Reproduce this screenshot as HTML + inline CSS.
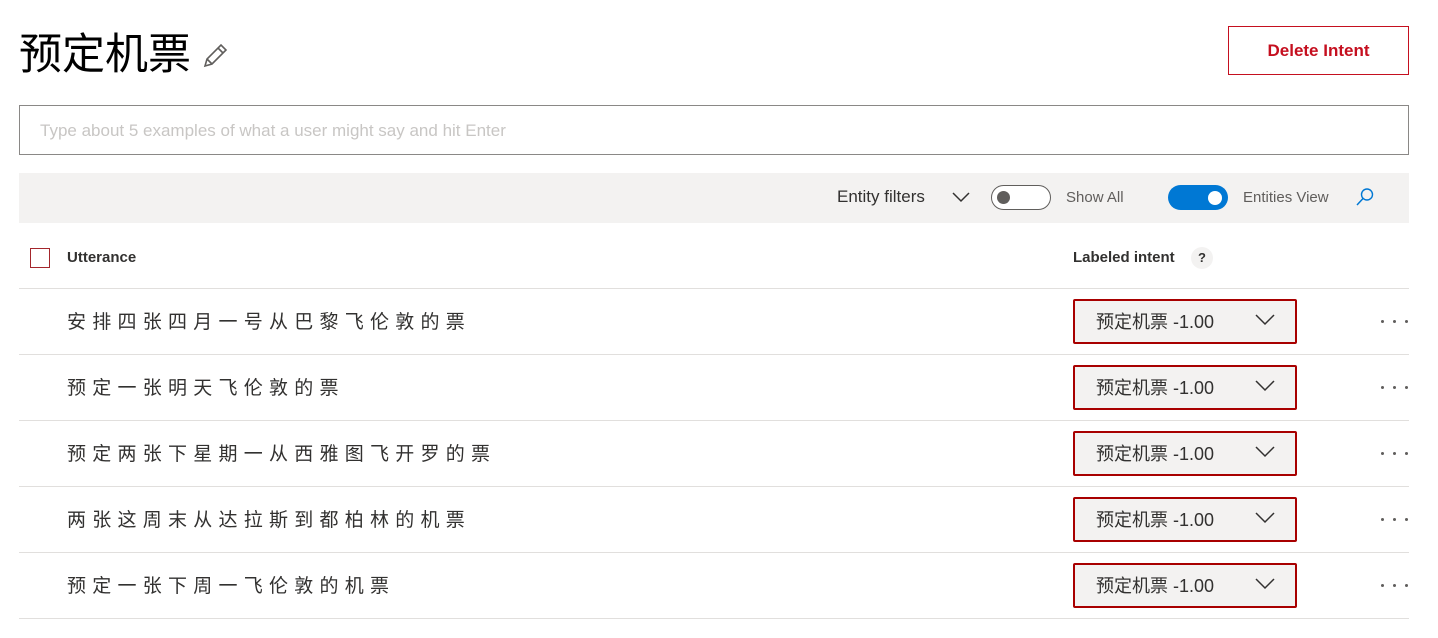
<!DOCTYPE html>
<html><head><meta charset="utf-8"><style>
*{margin:0;padding:0;box-sizing:border-box}
body{width:1438px;height:638px;background:#fff;font-family:"Liberation Sans","Noto Sans CJK SC",sans-serif;color:#323130;position:relative;overflow:hidden}
.abs{position:absolute}
.title{left:19px;top:28px;font-size:43px;color:#000;line-height:54px}
.del{left:1228px;top:26px;width:181px;height:49px;border:1px solid #c50f1f;color:#c50f1f;font-size:17px;font-weight:bold;display:flex;align-items:center;justify-content:center}
.inp{left:19px;top:105px;width:1390px;height:50px;border:1px solid #8a8886;font-size:17px;color:#c8c6c4;padding-left:20px;line-height:50px}
.bar{left:19px;top:173px;width:1390px;height:50px;background:#f3f2f1}
.sep{left:19px;width:1390px;height:1px;background:#e1dfdd}
.utt{left:67px;font-size:19px;letter-spacing:6.25px;color:#323130;line-height:24px;white-space:nowrap}
.dd{left:1073px;width:224px;height:45px;border:2px solid #a80000;border-radius:2px;background:#f3f2f1;font-size:18px;color:#323130;padding-left:21px;line-height:43px}
.dots{left:1381px;width:28px;height:4px}
.dots i{position:absolute;top:0;width:3px;height:3px;border-radius:50%;background:#605e5c}
</style></head><body>
<div class="abs title">预定机票</div>
<svg class="abs" style="left:202px;top:43px" width="26" height="26" viewBox="0 0 26 26"><path d="M3 23 L5 16 L19 2 L24 7 L10 21 Z M5 16 L10 21 M16 5 L21 10" fill="none" stroke="#605e5c" stroke-width="1.6"/></svg>
<div class="abs del">Delete Intent</div>
<div class="abs inp">Type about 5 examples of what a user might say and hit Enter</div>
<div class="abs bar"></div>
<div class="abs" style="left:837px;top:187px;font-size:17px;color:#323130">Entity filters</div>
<svg class="abs" style="left:952px;top:191px" width="18" height="12"><path d="M1 2 L9 10 L17 2" fill="none" stroke="#323130" stroke-width="1.5"/></svg>
<div class="abs" style="left:991px;top:185px;width:60px;height:25px;border:1px solid #605e5c;border-radius:13px;background:#fff"></div>
<div class="abs" style="left:997px;top:191px;width:13px;height:13px;border-radius:50%;background:#605e5c"></div>
<div class="abs" style="left:1066px;top:189px;font-size:15px;color:#605e5c">Show All</div>
<div class="abs" style="left:1168px;top:185px;width:60px;height:25px;border-radius:13px;background:#0078d4"></div>
<div class="abs" style="left:1208px;top:191px;width:14px;height:14px;border-radius:50%;background:#fff"></div>
<div class="abs" style="left:1243px;top:189px;font-size:15px;color:#605e5c">Entities View</div>
<svg class="abs" style="left:1355px;top:187px" width="20" height="20"><circle cx="12" cy="7.5" r="5.5" fill="none" stroke="#0078d4" stroke-width="1.4"/><path d="M8 11.5 L2 18" stroke="#0078d4" stroke-width="1.5"/></svg>
<div class="abs" style="left:30px;top:248px;width:20px;height:20px;border:1px solid #a4262c"></div>
<div class="abs" style="left:67px;top:249px;font-size:15px;font-weight:bold;color:#323130">Utterance</div>
<div class="abs" style="left:1073px;top:249px;font-size:15px;font-weight:bold;color:#323130">Labeled intent</div>
<div class="abs" style="left:1191px;top:247px;width:22px;height:22px;border-radius:50%;background:#f3f2f1;font-size:13px;font-weight:bold;text-align:center;line-height:22px">?</div>
<div class="abs sep" style="top:288px"></div>
<div class="abs utt" style="top:311px">安排四张四月一号从巴黎飞伦敦的票</div>
<div class="abs dd" style="top:299px">预定机票 -1.00</div>
<div class="abs dots" style="top:320px"><i style="left:0"></i><i style="left:12px"></i><i style="left:24px"></i></div>
<div class="abs sep" style="top:354px"></div>
<div class="abs utt" style="top:377px">预定一张明天飞伦敦的票</div>
<div class="abs dd" style="top:365px">预定机票 -1.00</div>
<div class="abs dots" style="top:386px"><i style="left:0"></i><i style="left:12px"></i><i style="left:24px"></i></div>
<div class="abs sep" style="top:420px"></div>
<div class="abs utt" style="top:443px">预定两张下星期一从西雅图飞开罗的票</div>
<div class="abs dd" style="top:431px">预定机票 -1.00</div>
<div class="abs dots" style="top:452px"><i style="left:0"></i><i style="left:12px"></i><i style="left:24px"></i></div>
<div class="abs sep" style="top:486px"></div>
<div class="abs utt" style="top:509px">两张这周末从达拉斯到都柏林的机票</div>
<div class="abs dd" style="top:497px">预定机票 -1.00</div>
<div class="abs dots" style="top:518px"><i style="left:0"></i><i style="left:12px"></i><i style="left:24px"></i></div>
<div class="abs sep" style="top:552px"></div>
<div class="abs utt" style="top:575px">预定一张下周一飞伦敦的机票</div>
<div class="abs dd" style="top:563px">预定机票 -1.00</div>
<div class="abs dots" style="top:584px"><i style="left:0"></i><i style="left:12px"></i><i style="left:24px"></i></div>
<div class="abs sep" style="top:618px"></div>
<svg class="abs" style="left:1255px;top:314px" width="20" height="12"><path d="M1 1 L10 10 L19 1" fill="none" stroke="#323130" stroke-width="1.5"/></svg>
<svg class="abs" style="left:1255px;top:380px" width="20" height="12"><path d="M1 1 L10 10 L19 1" fill="none" stroke="#323130" stroke-width="1.5"/></svg>
<svg class="abs" style="left:1255px;top:446px" width="20" height="12"><path d="M1 1 L10 10 L19 1" fill="none" stroke="#323130" stroke-width="1.5"/></svg>
<svg class="abs" style="left:1255px;top:512px" width="20" height="12"><path d="M1 1 L10 10 L19 1" fill="none" stroke="#323130" stroke-width="1.5"/></svg>
<svg class="abs" style="left:1255px;top:578px" width="20" height="12"><path d="M1 1 L10 10 L19 1" fill="none" stroke="#323130" stroke-width="1.5"/></svg>
</body></html>
